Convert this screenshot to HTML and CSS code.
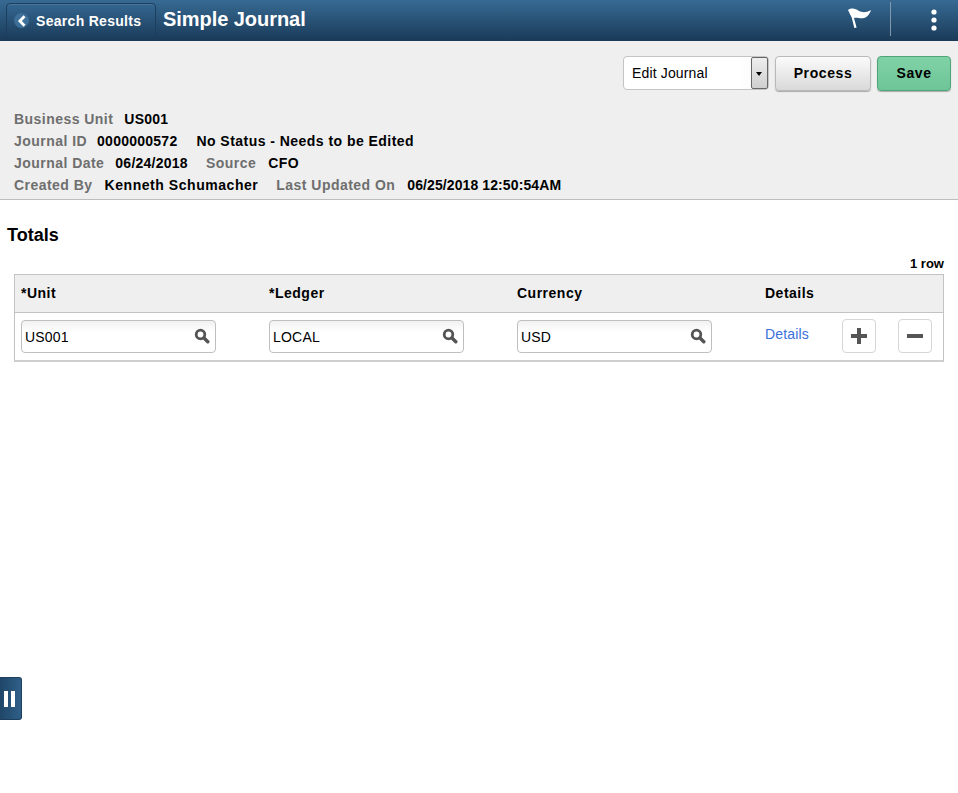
FILE: index.html
```html
<!DOCTYPE html>
<html lang="en">
<head>
<meta charset="utf-8">
<title>Simple Journal</title>
<link rel="stylesheet" href="styles.css">
</head>
<body>
<header class="banner">
  <a class="back">
    <span class="back-circle">
      <svg width="10" height="12" viewBox="0 0 10 12"><path d="M7.500 1.200 2.900 6l4.600 4.800" fill="none" stroke="#fff" stroke-width="2.800"/></svg>
    </span>
    <span>Search Results</span>
  </a>
  <h1 class="title">Simple Journal</h1>
  <div class="banner-icons">
    <svg class="flag" width="26" height="22" viewBox="0 0 26 22"><path d="M1 3C5 0 9 2 12 4c3 1.500 7 2 12-1-1 3-3 7-7 8-4 1-7-1-10 0L9.600 20.500 7.300 21 4.800 10.800C3.500 8 2 5.500 1 3z" fill="#fff"/></svg>
    <span class="divider"></span>
    <svg class="dots" width="8" height="24" viewBox="0 0 8 24"><circle cx="4" cy="4" r="2.600" fill="#fff"/><circle cx="4" cy="12" r="2.600" fill="#fff"/><circle cx="4" cy="20" r="2.600" fill="#fff"/></svg>
  </div>
</header>

<section class="summary">
  <div class="actions">
    <div class="select">
      <span class="select-text">Edit Journal</span>
      <span class="select-arrow"></span>
    </div>
    <button class="btn">Process</button>
    <button class="btn btn-save">Save</button>
  </div>
  <div class="info">
    <div class="info-row"><span class="lbl lg11">Business Unit</span><span class="val num">US001</span></div>
    <div class="info-row"><span class="lbl lg10">Journal ID</span><span class="val num lg19">0000000572</span><span class="val">No Status - Needs to be Edited</span></div>
    <div class="info-row"><span class="lbl lg11">Journal Date</span><span class="val num lg18">06/24/2018</span><span class="lbl lg12">Source</span><span class="val">CFO</span></div>
    <div class="info-row"><span class="lbl lg12">Created By</span><span class="val name lg18">Kenneth Schumacher</span><span class="lbl lg12">Last Updated On</span><span class="val stamp">06/25/2018 12:50:54AM</span></div>
  </div>
</section>

<main class="content">
  <h2 class="section-title">Totals</h2>
  <div class="row-count">1 row</div>
  <div class="grid">
    <div class="grid-head">
      <div>*Unit</div><div>*Ledger</div><div>Currency</div><div>Details</div>
    </div>
    <div class="grid-row">
      <div class="field"><span>US001</span><svg class="search" width="16" height="16" viewBox="0 0 16 16"><circle cx="6.500" cy="6.500" r="4.300" fill="none" stroke="#555" stroke-width="2.800"/><path d="M10 10l3.800 3.800" stroke="#555" stroke-width="3.400" stroke-linecap="round"/></svg></div>
      <div class="field"><span>LOCAL</span><svg class="search" width="16" height="16" viewBox="0 0 16 16"><circle cx="6.500" cy="6.500" r="4.300" fill="none" stroke="#555" stroke-width="2.800"/><path d="M10 10l3.800 3.800" stroke="#555" stroke-width="3.400" stroke-linecap="round"/></svg></div>
      <div class="field"><span>USD</span><svg class="search" width="16" height="16" viewBox="0 0 16 16"><circle cx="6.500" cy="6.500" r="4.300" fill="none" stroke="#555" stroke-width="2.800"/><path d="M10 10l3.800 3.800" stroke="#555" stroke-width="3.400" stroke-linecap="round"/></svg></div>
      <div class="row-end">
        <a class="link">Details</a>
        <span class="icon-btn plus"><svg width="16" height="16" viewBox="0 0 16 16"><path d="M8 0v16M0 8h16" stroke="#555" stroke-width="4"/></svg></span>
        <span class="icon-btn minus"><svg width="16" height="16" viewBox="0 0 16 16"><path d="M0 8h16" stroke="#555" stroke-width="4"/></svg></span>
      </div>
    </div>
  </div>
</main>

<div class="side-tab"><span class="bar"></span><span class="bar"></span></div>
</body>
</html>
```
FILE: styles.css
```css
* { box-sizing: border-box; }
html, body { margin: 0; padding: 0; }
body {
  font-family: "Liberation Sans", Arial, sans-serif;
  color: #000;
  background: #fff;
  min-height: 793px;
  overflow: hidden;
}
.banner {
  height: 41px;
  display: flex;
  align-items: flex-start;
  background: linear-gradient(#376a93, #1a3a58);
  padding: 3px 0 0 6px;
}
.back {
  width: 150px;
  height: 35px;
  display: flex;
  align-items: center;
  gap: 7px;
  padding-left: 7px;
  color: #fff;
  font-size: 14px;
  font-weight: bold;
  letter-spacing: 0.3px;
  border: 1px solid #1d3e5c;
  border-radius: 4px;
  background: linear-gradient(#346690, #1d3f5e);
  box-shadow: inset 0 1px 0 rgba(255,255,255,0.1);
}
.back-circle {
  width: 15px;
  height: 15px;
  border-radius: 50%;
  background: #3d6f99;
  display: flex;
  align-items: center;
  justify-content: center;
}
.title {
  margin: 4px 0 0 7px;
  font-size: 20px;
  line-height: 24px;
  font-weight: bold;
  letter-spacing: -0.05px;
  color: #fff;
}
.banner-icons {
  margin-left: auto;
  display: flex;
  align-items: flex-start;
}
.flag { margin-top: 4px; }
.divider {
  width: 1px;
  height: 34px;
  margin: -1px 0 0 17px;
  background: #7f98ad;
}
.dots { margin: 5px 20px 0 39px; }

.summary {
  height: 159px;
  background: #efefef;
  border-bottom: 1px solid #bdbdbd;
  padding-top: 15px;
}
.actions {
  display: flex;
  justify-content: flex-end;
  gap: 6px;
  padding-right: 7px;
}
.select {
  width: 146px;
  height: 34px;
  display: flex;
  background: linear-gradient(90deg, #fff 80%, #f8f8f8);
  border: 1px solid #c4c4c4;
  border-radius: 4px;
  font-size: 14px;
  line-height: 32px;
}
.select-text { flex: 1; padding-left: 8px; letter-spacing: 0.15px; }
.select-arrow {
  width: 17px;
  height: 32px;
  position: relative;
  background: linear-gradient(#eeeeee, #cfcfcf);
  border: 1px solid #666;
  border-radius: 2px;
}
.select-arrow::after {
  content: "";
  position: absolute;
  left: 4px;
  top: 14px;
  border: 3.5px solid transparent;
  border-top: 4px solid #000;
  border-bottom: 0;
}
.btn {
  width: 96px;
  height: 35px;
  padding: 0 0 2px;
  margin: 0;
  font-family: inherit;
  font-size: 14px;
  font-weight: bold;
  letter-spacing: 0.6px;
  color: #000;
  border: 1px solid #b9b9b9;
  border-radius: 4px;
  background: linear-gradient(#fbfbfb, #d9d9d9);
  box-shadow: 0 1px 1px #aaa;
}
.btn-save {
  width: 74px;
  border-color: #4da578;
  background: linear-gradient(#7fd2a5, #6fc598);
}
.info { padding: 17px 0 0 14px; }
.info-row {
  display: flex;
  height: 22px;
  line-height: 22px;
  font-size: 14px;
  font-weight: bold;
  letter-spacing: 0.46px;
}
.lbl { color: #6e6e6e; }
.val { color: #000; }
.num { letter-spacing: 0.25px; }
.name { letter-spacing: 0.55px; }
.stamp { letter-spacing: 0.1px; }
.lg10 { margin-right: 10px; }
.lg11 { margin-right: 11px; }
.lg12 { margin-right: 12px; }
.lg18 { margin-right: 18px; }
.lg19 { margin-right: 19px; }

.content { padding: 23px 14px 0; }
.section-title {
  margin: 0 0 0 -7px;
  font-size: 18px;
  line-height: 24px;
  font-weight: bold;
}
.row-count {
  margin-top: 8px;
  height: 19px;
  text-align: right;
  font-size: 13px;
  font-weight: bold;
  line-height: 17px;
}
.grid {
  width: 930px;
  height: 88px;
  border: 1px solid #c3c3c3;
  border-bottom-width: 2px;
  border-bottom-color: #cfcfcf;
}
.grid-head, .grid-row {
  display: grid;
  grid-template-columns: repeat(3, 248px) 1fr;
  padding-left: 6px;
}
.grid-head {
  height: 38px;
  background: #efefef;
  border-bottom: 1px solid #c3c3c3;
  font-size: 14px;
  font-weight: bold;
  letter-spacing: 0.5px;
  line-height: 37px;
}
.grid-row { padding-top: 7px; }
.field {
  width: 195px;
  height: 33px;
  display: flex;
  align-items: center;
  justify-content: space-between;
  padding: 0 5px 0 3px;
  border: 1px solid #bfbfbf;
  border-radius: 4px;
  background: linear-gradient(#f1f1f1, #fff 35%);
  font-size: 14px;
  letter-spacing: 0.2px;
}
.search { margin-top: -1px; }
.row-end {
  display: flex;
  align-items: flex-start;
  font-size: 14px;
}
.link { color: #3a6fdc; margin-top: 6px; line-height: 16px; letter-spacing: 0.15px; }
.icon-btn {
  width: 34px;
  height: 34px;
  margin-top: -1px;
  display: flex;
  align-items: center;
  justify-content: center;
  border: 1px solid #d6d6d6;
  border-radius: 4px;
  background: #fff;
}
.plus { margin-left: 33px; }
.minus { margin-left: 22px; }

.side-tab {
  position: absolute;
  left: 0;
  top: 677px;
  width: 22px;
  height: 43px;
  display: flex;
  gap: 3px;
  align-items: center;
  justify-content: center;
  padding-right: 2px;
  background: linear-gradient(90deg, #1f4668, #2f5f88);
  border: 1px solid #1d3e5c;
  border-left: 0;
  border-radius: 0 3px 3px 0;
}
.bar { width: 4px; height: 16px; background: #fff; }
```
